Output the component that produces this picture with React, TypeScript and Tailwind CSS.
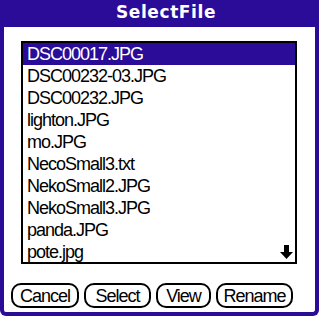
const files = [
  "DSC00017.JPG",
  "DSC00232-03.JPG",
  "DSC00232.JPG",
  "lighton.JPG",
  "mo.JPG",
  "NecoSmall3.txt",
  "NekoSmall2.JPG",
  "NekoSmall3.JPG",
  "panda.JPG",
  "pote.jpg",
];

const buttons = [
  { label: "Cancel", cls: "w-[68px]" },
  { label: "Select", cls: "w-[67px]" },
  { label: "View", cls: "w-[55px]" },
  { label: "Rename", cls: "w-[77px]" },
];

const palmFont = {
  fontFamily: '"Liberation Sans", Arial, sans-serif',
};

const App = () => {
  const selected = 0;

  return (
    <div className="w-[319px] h-[319px] bg-white overflow-hidden">
      <div className="h-[316px] flex flex-col border-x-4 border-b-4 border-[#2a0c98] rounded-b-[6px]">
        <div
          className="h-[27px] -mx-1 bg-[#2a0c98] text-white text-[17px] font-bold tracking-[0.6px] flex items-center justify-center pl-[13px] pb-[2px]"
          style={{ fontFamily: '"DejaVu Sans", sans-serif' }}
        >
          SelectFile
        </div>

        <div className="flex-1 flex flex-col pt-[14px] pl-[17px] pr-[18px]">
          <div className="relative h-[223px] border-2 border-black">
            {files.map((name, i) => (
              <div
                key={name}
                className={
                  i === selected
                    ? "h-[22px] pl-[4px] flex items-center bg-[#2a0c98] text-white text-[18px] tracking-[-1px] leading-none"
                    : "h-[22px] pl-[4px] flex items-center text-black text-[18px] tracking-[-1px] leading-none"
                }
                style={palmFont}
              >
                {name}
              </div>
            ))}
            <svg
              className="absolute right-[2px] bottom-[3px]"
              width="13"
              height="14"
              viewBox="0 0 13 14"
            >
              <path d="M4 0h5v7h4l-6.5 7-6.5-7h4z" fill="#000" />
            </svg>
          </div>

          <div className="flex items-center gap-[5px] mt-[19px] -ml-[10px]">
            {buttons.map((b) => (
              <button
                key={b.label}
                className={`${b.cls} h-[25px] border-2 border-black rounded-[10px] bg-white text-black text-[18px] tracking-[-1px] leading-none flex items-center justify-center`}
                style={palmFont}
              >
                {b.label}
              </button>
            ))}
          </div>
        </div>
      </div>
    </div>
  );
};

export default App;
